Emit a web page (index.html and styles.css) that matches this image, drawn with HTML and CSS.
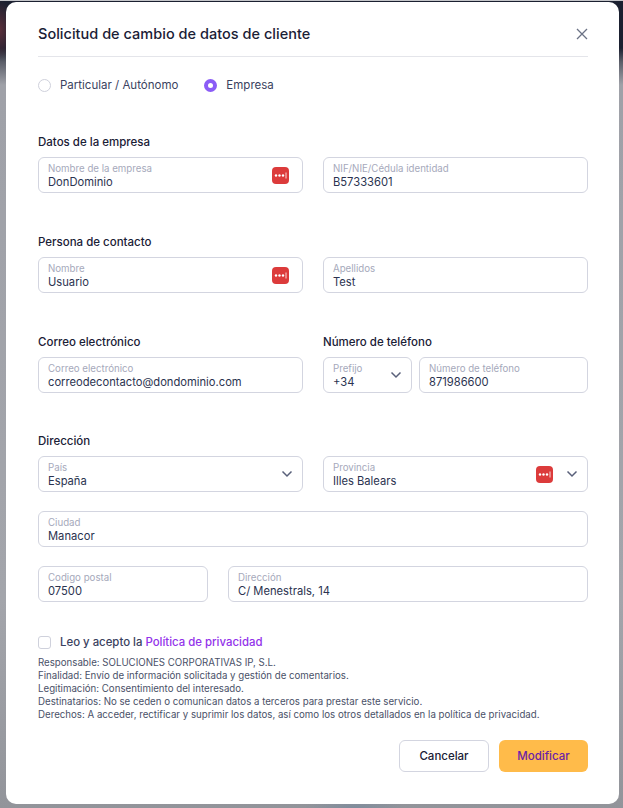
FILE: index.html
```html
<!DOCTYPE html>
<html>
<head>
	<title>Solicitud de cambio de datos de cliente</title>
	<link rel="stylesheet" href="styles.css">
</head>
<body>
	<div class="modal">
		<div class="modal-head">
			<h1>Solicitud de cambio de datos de cliente</h1>
			<svg class="close" width="12" height="12" viewBox="0 0 12 12"><path d="M1 1l10 10M11 1L1 11"/></svg>
		</div>

		<div class="radios">
			<label class="radio"><span class="dot"></span>Particular / Autónomo</label>
			<label class="radio"><span class="dot on"></span>Empresa</label>
		</div>

		<div class="section">
			<div class="grid two">
				<div>
					<h2>Datos de la empresa</h2>
					<div class="field">
						<div class="txt"><span class="lbl">Nombre de la empresa</span><span class="val">DonDominio</span></div>
						<svg class="key" width="17" height="17" viewBox="0 0 17 17"><rect width="17" height="17" rx="4" fill="#dc3b3b"/><circle cx="4" cy="8.500" r="1.200" fill="#fff"/><circle cx="7.500" cy="8.500" r="1.200" fill="#fff"/><circle cx="11" cy="8.500" r="1.200" fill="#fff"/><path d="M14 5.500v6" stroke="#fff" stroke-width=".8"/></svg>
					</div>
				</div>
				<div>
					<h2>&nbsp;</h2>
					<div class="field">
						<div class="txt"><span class="lbl">NIF/NIE/Cédula identidad</span><span class="val">B57333601</span></div>
					</div>
				</div>
			</div>
		</div>

		<div class="section">
			<div class="grid two">
				<div>
					<h2>Persona de contacto</h2>
					<div class="field">
						<div class="txt"><span class="lbl">Nombre</span><span class="val">Usuario</span></div>
						<svg class="key" width="17" height="17" viewBox="0 0 17 17"><rect width="17" height="17" rx="4" fill="#dc3b3b"/><circle cx="4" cy="8.500" r="1.200" fill="#fff"/><circle cx="7.500" cy="8.500" r="1.200" fill="#fff"/><circle cx="11" cy="8.500" r="1.200" fill="#fff"/><path d="M14 5.500v6" stroke="#fff" stroke-width=".8"/></svg>
					</div>
				</div>
				<div>
					<h2>&nbsp;</h2>
					<div class="field">
						<div class="txt"><span class="lbl">Apellidos</span><span class="val">Test</span></div>
					</div>
				</div>
			</div>
		</div>

		<div class="section">
			<div class="grid two">
				<div>
					<h2>Correo electrónico</h2>
					<div class="field">
						<div class="txt"><span class="lbl">Correo electrónico</span><span class="val">correodecontacto@dondominio.com</span></div>
					</div>
				</div>
				<div>
					<h2>Número de teléfono</h2>
					<div class="phone">
						<div class="field select prefix">
							<div class="txt"><span class="lbl">Prefijo</span><span class="val">+34</span></div>
							<svg class="chev" width="12" height="8" viewBox="0 0 12 8"><path d="M1.500 1.500L6 6l4.500-4.500"/></svg>
						</div>
						<div class="field grow">
							<div class="txt"><span class="lbl">Número de teléfono</span><span class="val">871986600</span></div>
						</div>
					</div>
				</div>
			</div>
		</div>

		<div class="section address-block">
			<h2>Dirección</h2>
			<div class="grid two">
				<div class="field select">
					<div class="txt"><span class="lbl">País</span><span class="val">España</span></div>
					<svg class="chev" width="12" height="8" viewBox="0 0 12 8"><path d="M1.500 1.500L6 6l4.500-4.500"/></svg>
				</div>
				<div class="field select">
					<div class="txt"><span class="lbl">Provincia</span><span class="val">Illes Balears</span></div>
					<svg class="key" width="17" height="17" viewBox="0 0 17 17"><rect width="17" height="17" rx="4" fill="#dc3b3b"/><circle cx="4" cy="8.500" r="1.200" fill="#fff"/><circle cx="7.500" cy="8.500" r="1.200" fill="#fff"/><circle cx="11" cy="8.500" r="1.200" fill="#fff"/><path d="M14 5.500v6" stroke="#fff" stroke-width=".8"/></svg>
					<svg class="chev" width="12" height="8" viewBox="0 0 12 8"><path d="M1.500 1.500L6 6l4.500-4.500"/></svg>
				</div>
			</div>
			<div class="field spaced">
				<div class="txt"><span class="lbl">Ciudad</span><span class="val">Manacor</span></div>
			</div>
			<div class="address spaced">
				<div class="field">
					<div class="txt"><span class="lbl">Codigo postal</span><span class="val">07500</span></div>
				</div>
				<div class="field">
					<div class="txt"><span class="lbl">Dirección</span><span class="val">C/ Menestrals, 14</span></div>
				</div>
			</div>
		</div>

		<label class="accept"><span class="box"></span>Leo y acepto la&nbsp;<a href="#">Política de privacidad</a></label>

		<div class="legal">
			<div>Responsable: SOLUCIONES CORPORATIVAS IP, S.L.</div>
			<div>Finalidad: Envío de información solicitada y gestión de comentarios.</div>
			<div>Legitimación: Consentimiento del interesado.</div>
			<div>Destinatarios: No se ceden o comunican datos a terceros para prestar este servicio.</div>
			<div>Derechos: A acceder, rectificar y suprimir los datos, así como los otros detallados en la política de privacidad.</div>
		</div>

		<div class="actions">
			<button class="btn cancel">Cancelar</button>
			<button class="btn submit">Modificar</button>
		</div>
	</div>
</body>
</html>
```
FILE: styles.css
```css
*{
	box-sizing: border-box;
}

html, body{
	width: 100%;
	height: 100%;
	margin: 0px;
	overflow: hidden;
}

/* the dimmed page behind the modal */
body{
	background:
		linear-gradient(180deg, #c4c5c9 0px, #c4c5c9 1px, transparent 1px),
		radial-gradient(ellipse 14px 30px at 0px 30px, #5a2f3a, transparent),
		radial-gradient(ellipse 50px 12px at 355px 808px, #7f8c9c, transparent),
		linear-gradient(180deg, #1b2030 0px, #1b2030 48px, #5b5e69 62px, #9fa1a8 85px, #a3a5ab 600px, #92949a 808px);
	font-family: "Inter", sans-serif;
	color: #2b3350;
	padding: 2px 4px 4px 6px;
}

.modal{
	background: #fff;
	border-radius: 10px;
	height: 802px;
	padding: 0px 31px 0px 32px;
}

.modal-head{
	display: flex;
	justify-content: space-between;
	align-items: center;
	height: 55px;
	padding-top: 8px;
	border-bottom: 1px solid #e4e5ea;
}

h1{
	font-size: 14.500px;
	font-weight: 500;
	letter-spacing: 0.02px;
	color: #1a2036;
	margin: 0px;
}

.close{
	fill: none;
	stroke: #6b7285;
	stroke-width: 1.3;
	margin-top: 2px;
}

.radios{
	display: flex;
	gap: 26px;
	margin-top: 20px;
	height: 16px;
}

.radio{
	display: flex;
	align-items: center;
	gap: 9px;
	font-size: 11.500px;
	color: #3a4260;
}

.dot{
	width: 13px;
	height: 13px;
	border-radius: 50%;
	border: 1px solid #cfd1dc;
}

.dot.on{
	border: 4px solid #8b5cf6;
}

.section{
	margin-top: 42px;
}

.address-block{
	margin-top: 41px;
}

h2{
	font-size: 11.500px;
	font-weight: 500;
	color: #1a2036;
	margin: 0px 0px 8px 0px;
	line-height: 14px;
}

.grid.two{
	display: grid;
	grid-template-columns: 265px 265px;
	gap: 20px;
}

.field{
	display: flex;
	align-items: center;
	height: 36px;
	border: 1px solid #d3d5e0;
	border-radius: 6px;
	padding: 2px 13px 0px 9px;
}

.field.select{
	padding-right: 9px;
}

.txt{
	display: flex;
	flex-direction: column;
	flex-grow: 1;
	min-width: 0;
}

.lbl{
	font-size: 9.700px;
	line-height: 12px;
	color: #a6a9bb;
	white-space: nowrap;
}

.val{
	font-size: 11.200px;
	line-height: 14px;
	color: #2b3350;
	white-space: nowrap;
}

.key{
	flex-shrink: 0;
	margin-top: -2px;
}

.chev{
	flex-shrink: 0;
	margin-left: 13px;
	margin-top: -2px;
	fill: none;
	stroke: #59607a;
	stroke-width: 1.5;
}

.phone{
	display: flex;
	gap: 7px;
}

.prefix{
	width: 89px;
}

.grow{
	flex-grow: 1;
}

.spaced{
	margin-top: 19px;
}

.address{
	display: grid;
	grid-template-columns: 170px 360px;
	gap: 20px;
}

.accept{
	display: flex;
	align-items: center;
	margin-top: 32px;
	font-size: 11.400px;
	font-weight: 500;
	color: #3a4260;
	height: 16px;
}

.accept a{
	color: #9333ea;
	text-decoration: none;
}

.box{
	width: 13px;
	height: 13px;
	border: 1px solid #cfd1dc;
	border-radius: 3px;
	margin-right: 9px;
}

.legal{
	margin-top: 6px;
	font-size: 9.700px;
	line-height: 13px;
	color: #4a5168;
}

.actions{
	display: flex;
	justify-content: flex-end;
	gap: 10px;
	margin-top: 19px;
}

.btn{
	height: 32px;
	border-radius: 6px;
	font-family: inherit;
	font-size: 11.500px;
	font-weight: 500;
}

.cancel{
	width: 90px;
	background: #fff;
	border: 1px solid #d3d5e0;
	color: #1a2036;
}

.submit{
	width: 89px;
	background: #ffbb4a;
	border: none;
	color: #6b21a8;
}
```
